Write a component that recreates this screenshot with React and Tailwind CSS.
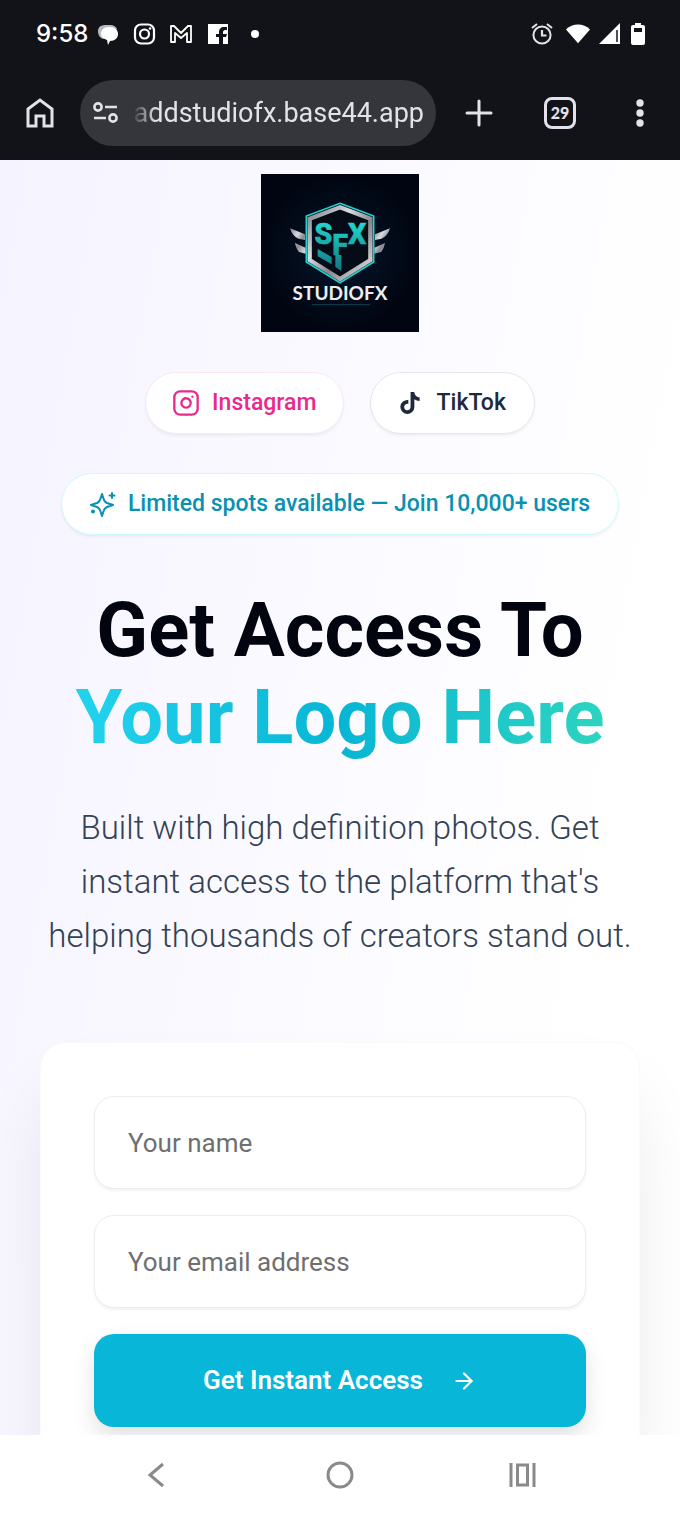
import { useState } from "react";
import { ArrowRight, Instagram } from "lucide-react";
import { FaTiktok } from "react-icons/fa";

const StatusBar = () => {
    return (
        <div className="flex items-center justify-between pl-9 pr-[34px] pt-0.5 h-[66px] text-white">
            <div className="flex items-center">
                <span className="font-['Inter',sans-serif] text-2xl font-medium w-15">9:58</span>
                <svg viewBox="0 0 24 24" className="w-6 h-6" aria-hidden="true">
                    <path d="M2 9C2 5 5 3 10 3h4c4 0 6 2 7 4L7 17c-3-1-5-4-5-8z" fill="#b9b9bf"/>
                    <path d="M13 5c6 0 9 3 9 7s-3 7-8 7l-2 4-1-5c-3-1-6-3-6-6 0-4 3-7 8-7z" fill="#fff"/>
                </svg>
                <svg viewBox="0 0 24 24" className="w-6 h-6 ml-3" fill="none" stroke="currentColor" strokeWidth="2.2" aria-hidden="true">
                    <rect x="3" y="2.5" width="19" height="19" rx="6"/>
                    <circle cx="12.5" cy="12" r="4.5"/>
                    <circle cx="18" cy="6.5" r="1.3" fill="currentColor" stroke="none"/>
                </svg>
                <svg viewBox="0 0 24 24" className="w-6 h-6 ml-3" fill="none" stroke="currentColor" strokeWidth="1.8" strokeLinejoin="round" aria-hidden="true">
                    <path d="M3 20V4h3l7 7 7-7h3v16h-4v-9l-6 5-6-5v9z"/>
                </svg>
                <svg viewBox="0 0 24 24" className="w-6 h-6 ml-3" aria-hidden="true">
                    <path d="M4 2h20v20h-5v-7h3l1-3h-4v-2c0-1 1-2 2-2h2V5h-3c-3 0-5 2-5 5v2h-3v3h3v7H4z" fill="#fff"/>
                </svg>
                <span className="w-2 h-2 rounded-full bg-white ml-[23px]"></span>
            </div>
            <div className="flex items-center gap-2">
                <svg viewBox="0 0 24 24" className="w-6 h-6 mr-1" fill="none" stroke="#e4e4e8" strokeWidth="2" aria-hidden="true">
                    <circle cx="12" cy="13" r="8.6"/>
                    <path d="M12 8v5.500h4.500" strokeWidth="2.2"/>
                    <path d="M2 6l5-4M22 6l-5-4"/>
                </svg>
                <svg viewBox="0 0 26 24" className="w-6 h-6" aria-hidden="true">
                    <path d="M0 7C7 0 19 0 26 7L13 22z" fill="#fff"/>
                </svg>
                <svg viewBox="0 0 24 24" className="w-6 h-6" aria-hidden="true">
                    <path d="M22 1v21H1z" fill="#fff"/>
                    <path d="M19 8v12" stroke="#121318" strokeWidth="1.5"/>
                </svg>
                <svg viewBox="0 0 16 24" className="w-4 h-6" aria-hidden="true">
                    <path d="M5 1h6v2h2q2 0 2 2v16q0 2-2 2H3q-2 0-2-2V5q0-2 2-2h2z" fill="#fff"/>
                    <path d="M4 6h8v4H4z" fill="#121318"/>
                </svg>
            </div>
        </div>
    )
}

const BrowserBar = () => {
    return (
        <div className="flex items-center h-[94px] px-6 text-[#e2e2ea]">
            <button type="button" aria-label="Home" className="shrink-0">
                <svg viewBox="0 0 32 32" className="w-8 h-8" fill="none" stroke="currentColor" strokeWidth="3">
                    <path d="M4 12L16 3l12 9v17h-8v-10h-8v10H4z"/>
                </svg>
            </button>
            <div className="flex items-center flex-1 min-w-0 h-[66px] ml-6 px-3 rounded-full bg-[#35363b]">
                <svg viewBox="0 0 28 24" className="w-7 h-6 shrink-0" fill="none" stroke="currentColor" strokeWidth="2.6" aria-hidden="true">
                    <circle cx="6" cy="6" r="3.600"/>
                    <circle cx="21" cy="17" r="3.600"/>
                    <path d="M13 6h12M2 17h12"/>
                </svg>
                <input type="text" aria-label="Address" defaultValue="addstudiofx.base44.app"
                    className="w-full min-w-0 ml-3 bg-transparent outline-none text-[27px] text-right [mask-image:linear-gradient(to_right,transparent,black_24px)]"/>
            </div>
            <button type="button" aria-label="New tab" className="ml-7 shrink-0">
                <svg viewBox="0 0 32 32" className="w-8 h-8" fill="none" stroke="currentColor" strokeWidth="3" strokeLinecap="round">
                    <path d="M15 4v24M3 16h24"/>
                </svg>
            </button>
            <button type="button" aria-label="Open tabs" className="flex items-center justify-center w-8 h-8 ml-12 shrink-0 rounded-lg border-3 border-current font-['Lato',sans-serif] text-base font-black">
                29
            </button>
            <button type="button" aria-label="Menu" className="ml-12 shrink-0">
                <svg viewBox="0 0 32 32" className="w-8 h-8" fill="currentColor">
                    <circle cx="16" cy="6" r="3.700"/>
                    <circle cx="16" cy="16" r="3.700"/>
                    <circle cx="16" cy="26" r="3.700"/>
                </svg>
            </button>
        </div>
    )
}

const Logo = () => {
    return (
        <svg viewBox="33 27 474 474" className="w-[158px] h-[158px]" role="img" aria-label="Studio FX">
            <defs>
                <radialGradient id="night">
                    <stop offset="0" stopColor="#04162a"/>
                    <stop offset="1" stopColor="#010511"/>
                </radialGradient>
                <linearGradient id="steel" x1="0" y1="0" x2="1" y2="1">
                    <stop offset="0" stopColor="#7d8088"/>
                    <stop offset="0.35" stopColor="#d9dade"/>
                    <stop offset="0.6" stopColor="#85888f"/>
                    <stop offset="1" stopColor="#e6e6e8"/>
                </linearGradient>
                <linearGradient id="teal" gradientUnits="userSpaceOnUse" x1="0" y1="160" x2="0" y2="325">
                    <stop offset="0" stopColor="#25e0d4"/>
                    <stop offset="1" stopColor="#0c7280"/>
                </linearGradient>
            </defs>
            <rect x="33" y="27" width="474" height="474" fill="url(#night)"/>
            <path d="M120 190l45 18v17l-20-4q-18-8-25-31zM135 234l32 14v18l-20-5q-8-8-12-27z" fill="url(#steel)"/>
            <path d="M420 190l-45 18v17l20-4q18-8 25-31zM405 234l-32 14v18l20-5q8-8 12-27z" fill="url(#steel)"/>
            <path d="M270 115l101 38v138l-101 62-101-62V153z" fill="#05101c" stroke="#1fd3cf" strokeWidth="5"/>
            <path d="M270 127l91 34v124l-91 57-91-57V161z" fill="#050c17" stroke="url(#steel)" strokeWidth="13"/>
            <path d="M203 252l42 24v22l-42-24zM256 270h18v48l-18-12z" fill="url(#teal)"/>
            <text x="271" y="238" textAnchor="middle" fontFamily="Roboto, sans-serif" fontWeight="800" fontSize="86" fill="url(#teal)" stroke="url(#teal)" strokeWidth="2">
                S<tspan dy="32">F</tspan><tspan dy="-32">X</tspan>
            </text>
            <text x="270" y="405" textAnchor="middle" fontFamily="Lato, sans-serif" fontWeight="700" fontSize="57" fill="#eeeef0">STUDIOFX</text>
            <path d="M185 419h175" stroke="#12606b" strokeWidth="2"/>
        </svg>
    )
}

const SparkleIcon = () => {
    return (
        <svg viewBox="0 0 26 26" className="w-[26px] h-[26px] shrink-0" fill="none" stroke="currentColor" strokeWidth="2" strokeLinecap="round" strokeLinejoin="round" aria-hidden="true">
            <path d="M12 3l2 6q1 2 3 3l6 2-6 2q-2 1-3 3l-2 6-2-6q-1-2-3-3l-6-2 6-2q2-1 3-3z"/>
            <path d="M22 2v5M19.500 4.500h5"/>
            <circle cx="3" cy="20.500" r="2" fill="currentColor" stroke="none"/>
        </svg>
    )
}

const SignupForm = () => {
    const [name,setName] = useState('');
    const [email,setEmail] = useState('');

    return (
        <form onSubmit={(e) => e.preventDefault()}
            className="flex flex-col gap-[26px] mt-[79px] p-[53px] rounded-[26px] bg-white border border-gray-50 shadow-[0_42px_80px_-20px_rgba(15,23,42,0.13)]">
            <input type="text" aria-label="Your name" placeholder="Your name" value={name} onChange={(e) => setName(e.target.value)}
                className="w-full h-[93px] px-[33px] rounded-[20px] border border-[#ececef] bg-white text-[26px] placeholder:text-[#6f6f6f] shadow-[0_2px_3px_rgba(0,0,0,0.05)] outline-none"/>
            <input type="email" aria-label="Your email address" placeholder="Your email address" value={email} onChange={(e) => setEmail(e.target.value)}
                className="w-full h-[93px] px-[33px] rounded-[20px] border border-[#ececef] bg-white text-[26px] placeholder:text-[#6f6f6f] shadow-[0_2px_3px_rgba(0,0,0,0.05)] outline-none"/>
            <button type="submit" className="flex items-center justify-center gap-7 w-full h-[93px] rounded-[20px] bg-[#08b6d8] text-white text-[26px] font-semibold shadow-[0_10px_24px_-2px_rgba(0,0,0,0.14)]">
                Get Instant Access
                <ArrowRight size={26}/>
            </button>
        </form>
    )
}

const NavBar = () => {
    return (
        <nav className="flex items-center justify-around shrink-0 h-20 px-16 bg-white text-[#8a8a8a]">
            <button type="button" aria-label="Back">
                <svg viewBox="0 0 32 32" className="w-8 h-8" fill="none" stroke="currentColor" strokeWidth="3">
                    <path d="M23 5L10 16l13 11"/>
                </svg>
            </button>
            <button type="button" aria-label="Home screen">
                <svg viewBox="0 0 32 32" className="w-8 h-8" fill="none" stroke="currentColor" strokeWidth="3">
                    <circle cx="16" cy="16" r="12"/>
                </svg>
            </button>
            <button type="button" aria-label="Recent apps">
                <svg viewBox="0 0 32 32" className="w-8 h-8" fill="none" stroke="currentColor" strokeWidth="3">
                    <path d="M3 4v24M26 4v24M9.500 6h10v20h-10z"/>
                </svg>
            </button>
        </nav>
    )
}

const App = () => {
    return (
        <div className="flex flex-col h-screen font-['Roboto',sans-serif] bg-white">
            <header className="shrink-0 bg-[#121318]">
                <StatusBar />
                <BrowserBar />
            </header>
            <main className="flex-1 min-h-0 overflow-y-auto [scrollbar-width:none]">
                <div className="flex flex-col items-stretch px-10 pt-3.5 pb-10 bg-[linear-gradient(100deg,#f5f3ff,#fbfaff_45%,#ffffff_80%)]">
                    <div className="flex justify-center">
                        <Logo />
                    </div>
                    <div className="flex justify-center gap-[26px] mt-10">
                        <a href="#instagram" className="flex items-center gap-3 h-[62px] px-[26px] rounded-full border border-pink-100 bg-white text-[#e92a8c] text-[23px] font-medium shadow-[0_2px_3px_rgba(0,0,0,0.05)]">
                            <Instagram size={28}/>
                            Instagram
                        </a>
                        <a href="#tiktok" className="flex items-center gap-4 h-[62px] px-7 rounded-full border border-gray-200 bg-white text-[#1e293b] text-[23px] font-medium shadow-[0_2px_3px_rgba(0,0,0,0.05)]">
                            <FaTiktok size={22}/>
                            TikTok
                        </a>
                    </div>
                    <p className="flex items-center gap-3 h-[62px] mt-[39px] px-7 mx-auto rounded-full border border-cyan-100 bg-white text-[#0891b2] text-[23px] font-medium whitespace-nowrap shadow-[0_2px_3px_rgba(0,0,0,0.05)]">
                        <SparkleIcon />
                        Limited spots available — Join 10,000+ users
                    </p>
                    <h1 className="mt-[52px] text-center text-[76px] leading-[87px] font-bold text-[#020410]">
                        Get Access To
                        <span className="block w-fit mx-auto whitespace-nowrap bg-linear-to-r from-[#22d3ee] via-[#06b6d4] to-[#2dd4bf] bg-clip-text text-transparent">Your Logo Here</span>
                    </h1>
                    <p className="mt-10 text-center text-[33px] leading-[54px] font-light text-[#334155]">
                        Built with high definition photos. Get instant access to the platform that's helping thousands of creators stand out.
                    </p>
                    <SignupForm />
                </div>
            </main>
            <NavBar />
        </div>
    )
}

export default App;
